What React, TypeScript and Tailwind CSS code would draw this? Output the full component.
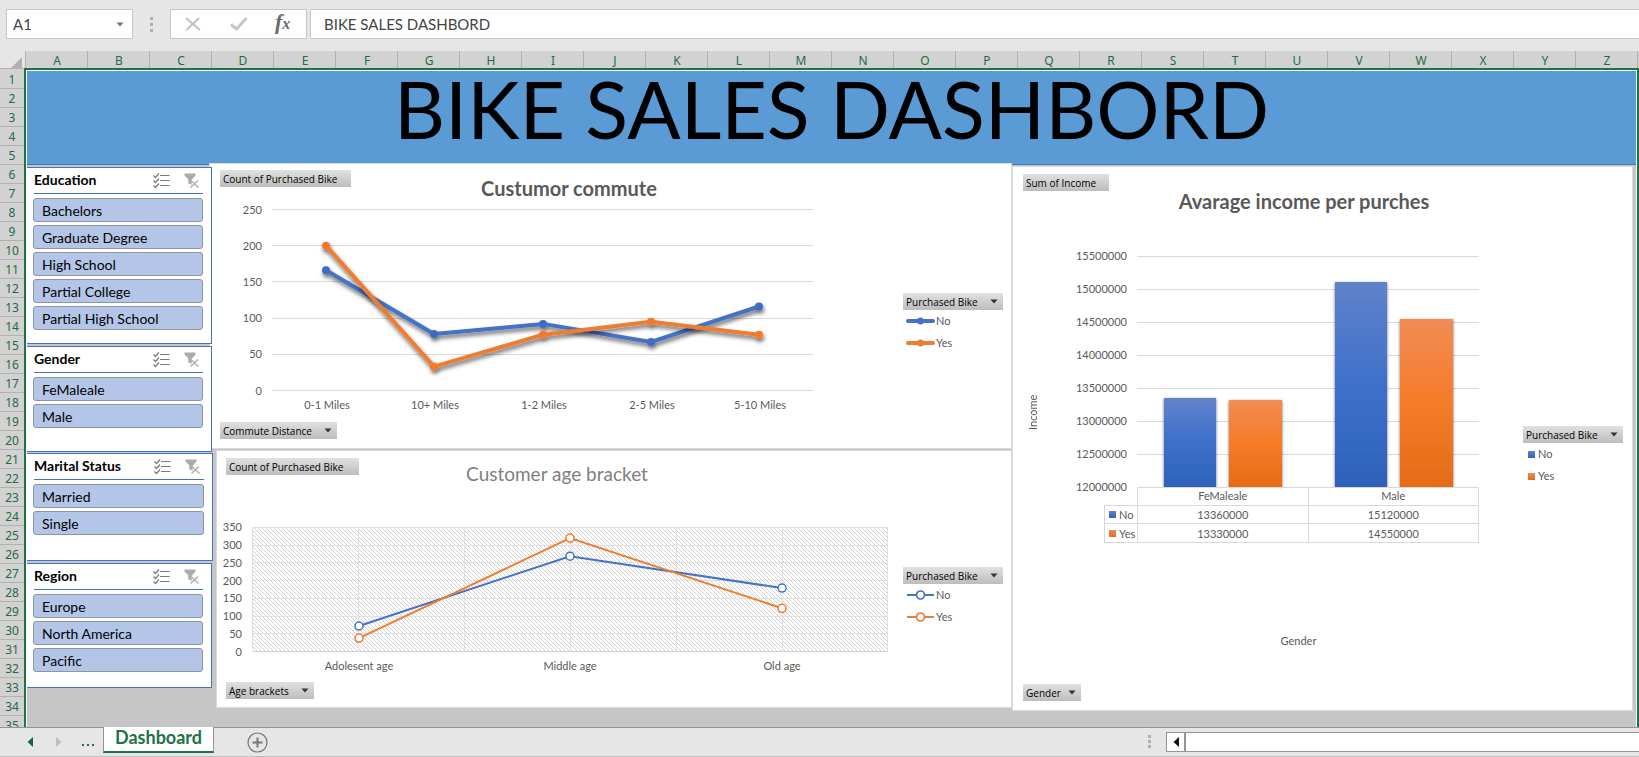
import React from "react";

const BLUE = "#4472c4";
const ORANGE = "#ed7d31";

const columns = "ABCDEFGHIJKLMNOPQRSTUVWXYZ".split("");
const rows = Array.from({ length: 35 }, (_, i) => i + 1);

function Caret() {
  return (
    <svg width="8" height="5" viewBox="0 0 8 5" aria-hidden="true">
      <path d="M0.5 0.5h7L4 4.5z" fill="#333" />
    </svg>
  );
}

function FieldButton({ label, menu, className }: { label: string; menu?: boolean; className: string }) {
  return (
    <button
      type="button"
      className={
        "flex h-[17px] shrink-0 items-center justify-between bg-linear-to-b from-[#e1e1e1] to-[#bdbdbd] pr-[5px] pl-[3px] font-['Open_Sans',sans-serif] text-[10px] leading-[17px] whitespace-nowrap text-black " +
        className
      }
    >
      <span className="pt-px">{label}</span>
      {menu && <Caret />}
    </button>
  );
}

function MultiSelectIcon() {
  return (
    <svg width="17" height="16" viewBox="0 0 17 16" fill="none" stroke="#7a7a7a" aria-hidden="true">
      <path d="M0.5 2.5l2 2 3.5-4M0.5 7.5l2 2 3.5-4M0.5 12.5l2 2 3.5-4" strokeWidth="1.3" />
      <path d="M7 2.5h9.5M7 7.5h9.5M7 12.5h9.5" strokeWidth="1.1" />
    </svg>
  );
}

function ClearFilterIcon() {
  return (
    <svg width="16" height="16" viewBox="0 0 16 16" aria-hidden="true">
      <path d="M0.5 0.5h11v2L8 6.5v5.5L4.5 10.5V6.5L0.5 2.5z" fill="#ababab" />
      <path d="M6 6.5h9v9H6z" fill="#fff" opacity="0.6" />
      <path d="M4.5 6h3v5.5l-3-1.5z" fill="#ababab" />
      <path d="M7 7.5l7.5 7M14 7.5l-7.5 7" stroke="#b4b4b4" strokeWidth="1.7" fill="none" />
    </svg>
  );
}

function Slicer({ title, items, className }: { title: string; items: string[]; className: string }) {
  return (
    <section className={"border border-l-0 border-[#4472c4] bg-white pr-[8px] pl-[6px] font-['Lato',sans-serif] " + className}>
      <header className="ml-px flex h-[26px] items-center border-b border-[#4472c4]">
        <h2 className="flex-1 pb-px text-[14px] leading-[16px] font-bold text-black">{title}</h2>
        <button type="button" aria-label={"Multi-select " + title} className="mr-[14px]">
          <MultiSelectIcon />
        </button>
        <button type="button" aria-label={"Clear filter " + title} className="mr-[3px]">
          <ClearFilterIcon />
        </button>
      </header>
      <ul className="mt-[4px] flex flex-col gap-[3px]">
        {items.map((item) => (
          <li key={item}>
            <button
              type="button"
              className="block h-[24px] w-full rounded-[3px] border border-[#8f949e] bg-[#b4c6e7] pl-[8px] text-left text-[14px] leading-[21px] text-black"
            >
              {item}
            </button>
          </li>
        ))}
      </ul>
    </section>
  );
}

const textStyle = "fill-[#595959] font-['Lato',sans-serif] text-[11px]";

function CommuteChart() {
  const xs = [106, 214, 323, 431, 539];
  const y = (v: number) => 190.5 - v * 0.724;
  const no = [166, 78, 92, 67, 116];
  const yes = [200, 33, 77, 95, 77];
  const pts = (d: number[]) => d.map((v, i) => `${xs[i]},${y(v)}`).join(" ");
  return (
    <svg viewBox="0 0 675 215" className="block w-full overflow-visible" role="img" aria-label="Custumor commute line chart">
      <defs>
        <filter id="lineShadow" x="-10%" y="-20%" width="120%" height="150%">
          <feDropShadow dx="1" dy="3" stdDeviation="2" floodColor="#000" floodOpacity="0.6" />
        </filter>
      </defs>
      {[0, 50, 100, 150, 200, 250].map((v) => (
        <g key={v}>
          <path d={`M52 ${Math.floor(y(v)) + 0.5}H593`} stroke="#d9d9d9" />
          <text x="42" y={y(v) + 4} textAnchor="end" className={textStyle}>{v}</text>
        </g>
      ))}
      {["0-1 Miles", "10+ Miles", "1-2 Miles", "2-5 Miles", "5-10 Miles"].map((t, i) => (
        <text key={t} x={xs[i] + 1} y="209" textAnchor="middle" className={textStyle}>{t}</text>
      ))}
      {[{ d: no, c: BLUE, m: "#3f6bc4" }, { d: yes, c: ORANGE, m: "#f5792a" }].map((s) => (
        <g key={s.c} filter="url(#lineShadow)">
          <polyline points={pts(s.d)} fill="none" stroke={s.c} strokeWidth="4" strokeLinejoin="round" strokeLinecap="round" />
          {s.d.map((v, i) => (
            <circle key={i} cx={xs[i]} cy={y(v)} r="4" fill={s.m} />
          ))}
        </g>
      ))}
    </svg>
  );
}

function AgeChart() {
  const xs = [133, 344, 556];
  const y = (v: number) => 151.5 - v * 0.3543;
  const no = [72, 269, 179];
  const yes = [38, 320, 122];
  const pts = (d: number[]) => d.map((v, i) => `${xs[i]},${y(v)}`).join(" ");
  return (
    <svg viewBox="0 0 669 175" className="block w-full overflow-visible" role="img" aria-label="Customer age bracket line chart">
      <defs>
        <pattern id="hatch" width="4" height="4" patternUnits="userSpaceOnUse" shapeRendering="crispEdges">
          <path d="M0 0h1v1h-1zM1 1h1v1h-1zM2 2h1v1h-1zM3 3h1v1h-1z" fill="#d2d2d2" />
        </pattern>
      </defs>
      <rect x="26" y="27" width="636" height="125" fill="url(#hatch)" />
      {[0, 50, 100, 150, 200, 250, 300, 350].map((v) => (
        <g key={v}>
          <path d={`M26 ${Math.floor(y(v)) + 0.5}H662`} stroke={v ? "#e0e0e0" : "#d0d0d0"} />
          <text x="16" y={y(v) + 4} textAnchor="end" className={textStyle}>{v}</text>
        </g>
      ))}
      {[26.5, 132.5, 238.5, 344.5, 450.5, 556.5, 661.5].map((x) => (
        <path key={x} d={`M${x} 27V152`} stroke="#e0e0e0" />
      ))}
      {["Adolesent age", "Middle age", "Old age"].map((t, i) => (
        <text key={t} x={xs[i]} y="170" textAnchor="middle" className={textStyle}>{t}</text>
      ))}
      {[{ d: no, c: BLUE }, { d: yes, c: ORANGE }].map((s) => (
        <g key={s.c} stroke={s.c}>
          <polyline points={pts(s.d)} fill="none" strokeWidth="2" />
          {s.d.map((v, i) => (
            <circle key={i} cx={xs[i]} cy={y(v)} r="4" fill="#fff" strokeWidth="1.5" />
          ))}
        </g>
      ))}
    </svg>
  );
}

function IncomeChart() {
  const ticks = [15500000, 15000000, 14500000, 14000000, 13500000, 13000000, 12500000];
  const bars = [
    { x: 90, w: 52, y: 174, f: "url(#barBlue)" },
    { x: 155, w: 53, y: 176, f: "url(#barOrange)" },
    { x: 261, w: 52, y: 58, f: "url(#barBlue)" },
    { x: 326, w: 53, y: 95, f: "url(#barOrange)" },
  ];
  return (
    <svg viewBox="0 0 405 263" className="block w-full overflow-visible" role="img" aria-label="Avarage income per purches bar chart">
      <defs>
        <linearGradient id="barBlue" x1="0" y1="0" x2="0" y2="1">
          <stop offset="0" stopColor="#6083cb" />
          <stop offset="0.5" stopColor="#3e70ca" />
          <stop offset="1" stopColor="#2e61ba" />
        </linearGradient>
        <linearGradient id="barOrange" x1="0" y1="0" x2="0" y2="1">
          <stop offset="0" stopColor="#f18c55" />
          <stop offset="0.5" stopColor="#f67b28" />
          <stop offset="1" stopColor="#e56b17" />
        </linearGradient>
        <filter id="barShadow" x="-20%" y="-10%" width="140%" height="120%">
          <feDropShadow dx="0" dy="1" stdDeviation="1.5" floodColor="#000" floodOpacity="0.6" />
        </filter>
        <clipPath id="plotClip">
          <path d="M0 0h405v263H0z" />
        </clipPath>
      </defs>
      {ticks.map((t, i) => (
        <g key={t}>
          <path d={`M63 ${32.5 + i * 33}H405`} stroke="#d9d9d9" />
          <text x="53" y={36 + i * 33} textAnchor="end" className={textStyle}>{t}</text>
        </g>
      ))}
      <text x="53" y="267" textAnchor="end" className={textStyle}>12000000</text>
      <g clipPath="url(#plotClip)">
        {bars.map((b) => (
          <rect key={b.x} x={b.x} y={b.y} width={b.w} height={263 - b.y} fill={b.f} filter="url(#barShadow)" />
        ))}
      </g>
    </svg>
  );
}

function Swatch({ orange }: { orange?: boolean }) {
  return (
    <span
      className={
        orange
          ? "size-[7px] shrink-0 bg-linear-to-b from-[#f18c55] to-[#e56b17]"
          : "size-[7px] shrink-0 bg-linear-to-b from-[#6083cb] to-[#2e61ba]"
      }
    />
  );
}

function LineKey({ color, hollow }: { color: string; hollow?: boolean }) {
  return (
    <svg width="30" height="10" viewBox="0 0 30 10" aria-hidden="true">
      {hollow ? (
        <>
          <path d="M2 5h27" stroke={color} strokeWidth="2" />
          <circle cx="15.5" cy="5" r="4" fill="#fff" stroke={color} strokeWidth="1.7" />
        </>
      ) : (
        <>
          <path d="M3 5h25" stroke={color} strokeWidth="4" strokeLinecap="round" />
          <circle cx="15.5" cy="5" r="3.5" fill={color} />
        </>
      )}
    </svg>
  );
}

function Legend({ kind, className }: { kind: "thick" | "hollow" | "square"; className: string }) {
  return (
    <div className={"w-[100px] shrink-0 " + className}>
      <FieldButton label="Purchased Bike" menu className="w-full" />
      <ul className="font-['Lato',sans-serif] text-[11px] text-[#595959]">
        {["No", "Yes"].map((name) => (
          <li key={name} className="flex h-[22px] items-center gap-[3px] pl-[2px]">
            {kind === "square" ? (
              <span className="flex pl-[3px]"><Swatch orange={name === "Yes"} /></span>
            ) : (
              <span className="-mr-[2px] flex"><LineKey color={name === "Yes" ? ORANGE : BLUE} hollow={kind === "hollow"} /></span>
            )}
            {name}
          </li>
        ))}
      </ul>
    </div>
  );
}

function FormulaBar() {
  return (
    <div className="flex h-[51px] shrink-0 items-start bg-[#e6e6e6] pt-[9px] pl-[6px] font-['Lato',sans-serif] text-[15px] text-[#444]">
      <div className="flex h-[30px] w-[127px] shrink-0 items-center border border-[#c6c6c6] bg-white pr-[8px] pl-[6px]">
        <input aria-label="Name box" defaultValue="A1" className="w-full min-w-0 bg-transparent outline-none" />
        <svg width="8" height="5" viewBox="0 0 8 5" className="shrink-0" aria-hidden="true"><path d="M0.5 0.5h7L4 4.5z" fill="#777" /></svg>
      </div>
      <div className="mt-[8px] ml-[17px] flex w-[20px] shrink-0 flex-col gap-[3px]">
        <i className="size-[3px] bg-[#b0b0b0]" />
        <i className="size-[3px] bg-[#b0b0b0]" />
        <i className="size-[3px] bg-[#b0b0b0]" />
      </div>
      <div className="flex h-[30px] w-[137px] shrink-0 items-center border border-[#c6c6c6] bg-white pl-[14px]">
        <button type="button" aria-label="Cancel" className="w-[45px]">
          <svg width="16" height="14" viewBox="0 0 16 14" fill="none" stroke="#c0c0c0" strokeWidth="2"><path d="M1 1l14 12M14 1L1.5 13" /></svg>
        </button>
        <button type="button" aria-label="Enter" className="w-[45px]">
          <svg width="18" height="14" viewBox="0 0 18 14" fill="none" stroke="#c6c6c6" strokeWidth="3"><path d="M1 7.5l5.5 4.5L16.5 1" /></svg>
        </button>
        <button type="button" aria-label="Insert function" className="pb-[3px] font-['Liberation_Serif',serif] text-[22px] leading-[24px] font-bold text-[#6a6a6a] italic">
          f<span className="text-[16px]">x</span>
        </button>
      </div>
      <input
        aria-label="Formula"
        defaultValue="BIKE SALES DASHBORD"
        className="ml-[3px] h-[30px] min-w-0 flex-1 border border-r-0 border-[#c6c6c6] bg-white pl-[13px] outline-none"
      />
    </div>
  );
}

function ColumnHeaders() {
  return (
    <div className="flex h-[17px] shrink-0 bg-[#d2d2d2] pr-px font-['Noto_Sans',sans-serif] text-[12px] leading-[19px] text-[#1f6b45]">
      <div className="flex w-[26px] shrink-0 items-end justify-end border-r border-[#b1b1b1] bg-[#e6e6e6] pr-[3px]">
        <svg width="11" height="11" viewBox="0 0 11 11"><path d="M11 0v11H0z" fill="#b1b1b1" /></svg>
      </div>
      {columns.map((c) => (
        <div key={c} className="flex-1 border-r border-[#b1b1b1] pl-px text-center">{c}</div>
      ))}
    </div>
  );
}

function SheetTabs() {
  return (
    <footer className="flex h-[30px] shrink-0 items-start border-t border-b border-t-[#949494] border-b-[#c0c0c0] bg-[#e6e6e6]">
      <div className="flex h-[28px] w-[103px] shrink-0 items-center pl-[27px]">
        <button type="button" aria-label="Previous sheet" className="w-[29px]">
          <svg width="6" height="10" viewBox="0 0 6 10"><path d="M6 0v10L0.5 5z" fill="#0f6b3a" /></svg>
        </button>
        <button type="button" aria-label="Next sheet" className="w-[25px]">
          <svg width="6" height="10" viewBox="0 0 6 10"><path d="M0 0v10L5.5 5z" fill="#bdbdbd" /></svg>
        </button>
        <button type="button" aria-label="More sheets">
          <svg width="14" height="12" viewBox="0 0 14 12"><path d="M1 8h2v2H1zM6 8h2v2H6zM11 8h2v2h-2z" fill="#217346" /></svg>
        </button>
      </div>
      <button
        type="button"
        className="-mt-px h-[26px] w-[111px] shrink-0 border-x border-b-2 border-x-[#949494] border-b-[#217346] bg-white pb-[3px] font-['Lato',sans-serif] text-[18px] leading-[21px] font-bold text-[#217346]"
      >
        Dashboard
      </button>
      <button type="button" aria-label="New sheet" className="mt-[4px] ml-[33px]">
        <svg width="21" height="21" viewBox="0 0 21 21" fill="none" stroke="#777">
          <circle cx="10.5" cy="10.5" r="9.5" strokeWidth="1.2" />
          <path d="M10.5 5.5v10M5.5 10.5h10" strokeWidth="2" />
        </svg>
      </button>
      <div className="flex-1" />
      <div className="flex w-[491px] shrink-0">
        <div className="mt-[7px] flex w-[18px] flex-col gap-[2px]">
          <i className="size-[3px] bg-[#b0b0b0]" />
          <i className="size-[3px] bg-[#b0b0b0]" />
          <i className="size-[3px] bg-[#b0b0b0]" />
        </div>
        <button type="button" aria-label="Scroll left" className="mt-[4px] flex h-[20px] w-[18px] items-center justify-center border border-r-0 border-[#949494] bg-white">
          <svg width="6" height="10" viewBox="0 0 6 10"><path d="M6 0v10L0.5 5z" fill="#111" /></svg>
        </button>
        <div className="mt-[4px] h-[20px] flex-1 border border-r-0 border-l-2 border-[#949494] bg-white" />
      </div>
    </footer>
  );
}

export default function App() {
  return (
    <div className="flex h-screen min-h-[400px] flex-col overflow-hidden bg-[#c6c6c6]">
      <FormulaBar />
      <ColumnHeaders />
      <div className="flex min-h-0 flex-1 overflow-hidden">
        <div className="w-[24px] shrink-0 border-t border-[#b1b1b1] bg-[#d2d2d2] pt-px font-['Noto_Sans',sans-serif] text-[12px] leading-[19px] text-[#1f6b45]">
          {rows.map((r) => (
            <div key={r} className="h-[19px] border-b border-[#b1b1b1] text-center">{r}</div>
          ))}
        </div>
        <main className="min-w-0 flex-1 border-2 border-b-0 border-[#217346]">
          <div className="min-h-full border border-b-0 border-white bg-[#c6c6c6]">
            <h1 className="h-[94px] border-b border-[#3f7ab8] bg-[#5b9bd5] text-center font-['Lato',sans-serif] text-[79px] leading-[75px] whitespace-nowrap text-black">
              BIKE SALES DASHBORD
            </h1>
            <div className="grid grid-cols-[186px_799fr_621fr] items-start pr-[3px]">
              <div className="relative z-10 flex flex-col pt-[2px]">
                <Slicer title="Education" className="mr-px h-[177px]" items={["Bachelors", "Graduate Degree", "High School", "Partial College", "Partial High School"]} />
                <Slicer title="Gender" className="mt-[2px] mr-px h-[106px]" items={["FeMaleale", "Male"]} />
                <Slicer title="Marital Status" className="mt-px h-[108px]" items={["Married", "Single"]} />
                <Slicer title="Region" className="mt-[2px] mr-px h-[125px]" items={["Europe", "North America", "Pacific"]} />
              </div>

              <div className="-mt-[2px] flex min-w-0 flex-col gap-px">
                <section className="-ml-[4px] flex h-[286px] gap-[8px] border border-[#d9d9d9] bg-white pt-[6px] pr-[8px] pl-[10px]">
                  <div className="min-w-0 flex-1">
                    <div className="flex h-[30px] items-start">
                      <FieldButton label="Count of Purchased Bike" className="w-[131px]" />
                      <h2 className="mt-[6px] flex-1 pr-[108px] text-center font-['Lato',sans-serif] text-[20px] leading-[24px] font-bold text-[#595959]">Custumor commute</h2>
                    </div>
                    <CommuteChart />
                    <FieldButton label="Commute Distance" menu className="mt-[7px] w-[117px]" />
                  </div>
                  <Legend kind="thick" className="pt-[123px]" />
                </section>
                <section className="ml-[3px] flex h-[258px] gap-[8px] border border-[#d9d9d9] bg-white pt-[7px] pr-[8px] pl-[9px]">
                  <div className="min-w-0 flex-1">
                    <div className="flex h-[42px] items-start">
                      <FieldButton label="Count of Purchased Bike" className="w-[133px]" />
                      <h2 className="mt-[4px] flex-1 pr-[140px] text-center font-['Lato',sans-serif] text-[19px] leading-[24px] text-[#7f7f7f]">Customer age bracket</h2>
                    </div>
                    <AgeChart />
                    <FieldButton label="Age brackets" menu className="mt-[7px] w-[88px]" />
                  </div>
                  <Legend kind="hollow" className="pt-[109px]" />
                </section>
              </div>

              <section className="mt-px h-[545px] min-w-0 border border-[#d9d9d9] bg-white pt-[7px] pr-[9px] pl-[10px]">
                <div className="flex h-[50px] items-start">
                  <FieldButton label="Sum of Income" className="w-[86px]" />
                  <h2 className="mt-[15px] flex-1 pr-[124px] text-center font-['Lato',sans-serif] text-[20px] leading-[24px] font-bold text-[#595959]">Avarage income per purches</h2>
                </div>
                <div className="flex font-['Lato',sans-serif] text-[11px] text-[#595959]">
                  <div className="mt-[168px] h-[40px] w-[20px] shrink-0 rotate-180 text-center leading-[20px] [writing-mode:vertical-rl]">Income</div>
                  <div className="ml-[31px] h-[460px] min-w-0 flex-1">
                    <IncomeChart />
                    <div className="pl-[30px]">
                      <table className="w-full table-fixed border-collapse text-center leading-[15px]">
                        <colgroup>
                          <col className="w-[33px]" />
                          <col />
                          <col />
                        </colgroup>
                        <thead>
                          <tr className="h-[18px]">
                            <td className="p-0" />
                            <th className="border border-[#d9d9d9] p-0 align-top font-normal">FeMaleale</th>
                            <th className="border border-[#d9d9d9] p-0 align-top font-normal">Male</th>
                          </tr>
                        </thead>
                        <tbody>
                          <tr className="h-[18px]">
                            <th className="border border-[#d9d9d9] p-0 font-normal"><span className="flex items-center gap-[3px] pl-[4px]"><Swatch />No</span></th>
                            <td className="border border-[#d9d9d9] p-0">13360000</td>
                            <td className="border border-[#d9d9d9] p-0">15120000</td>
                          </tr>
                          <tr className="h-[19px]">
                            <th className="border border-[#d9d9d9] p-0 font-normal"><span className="flex items-center gap-[3px] pl-[4px]"><Swatch orange />Yes</span></th>
                            <td className="border border-[#d9d9d9] p-0">13330000</td>
                            <td className="border border-[#d9d9d9] p-0">14550000</td>
                          </tr>
                        </tbody>
                      </table>
                    </div>
                    <p className="mt-[89px] pl-[44px] text-center leading-[18px]">Gender</p>
                  </div>
                  <Legend kind="square" className="ml-[44px] pt-[202px]" />
                </div>
                <FieldButton label="Gender" menu className="w-[58px]" />
              </section>
            </div>
          </div>
        </main>
      </div>
      <SheetTabs />
    </div>
  );
}
